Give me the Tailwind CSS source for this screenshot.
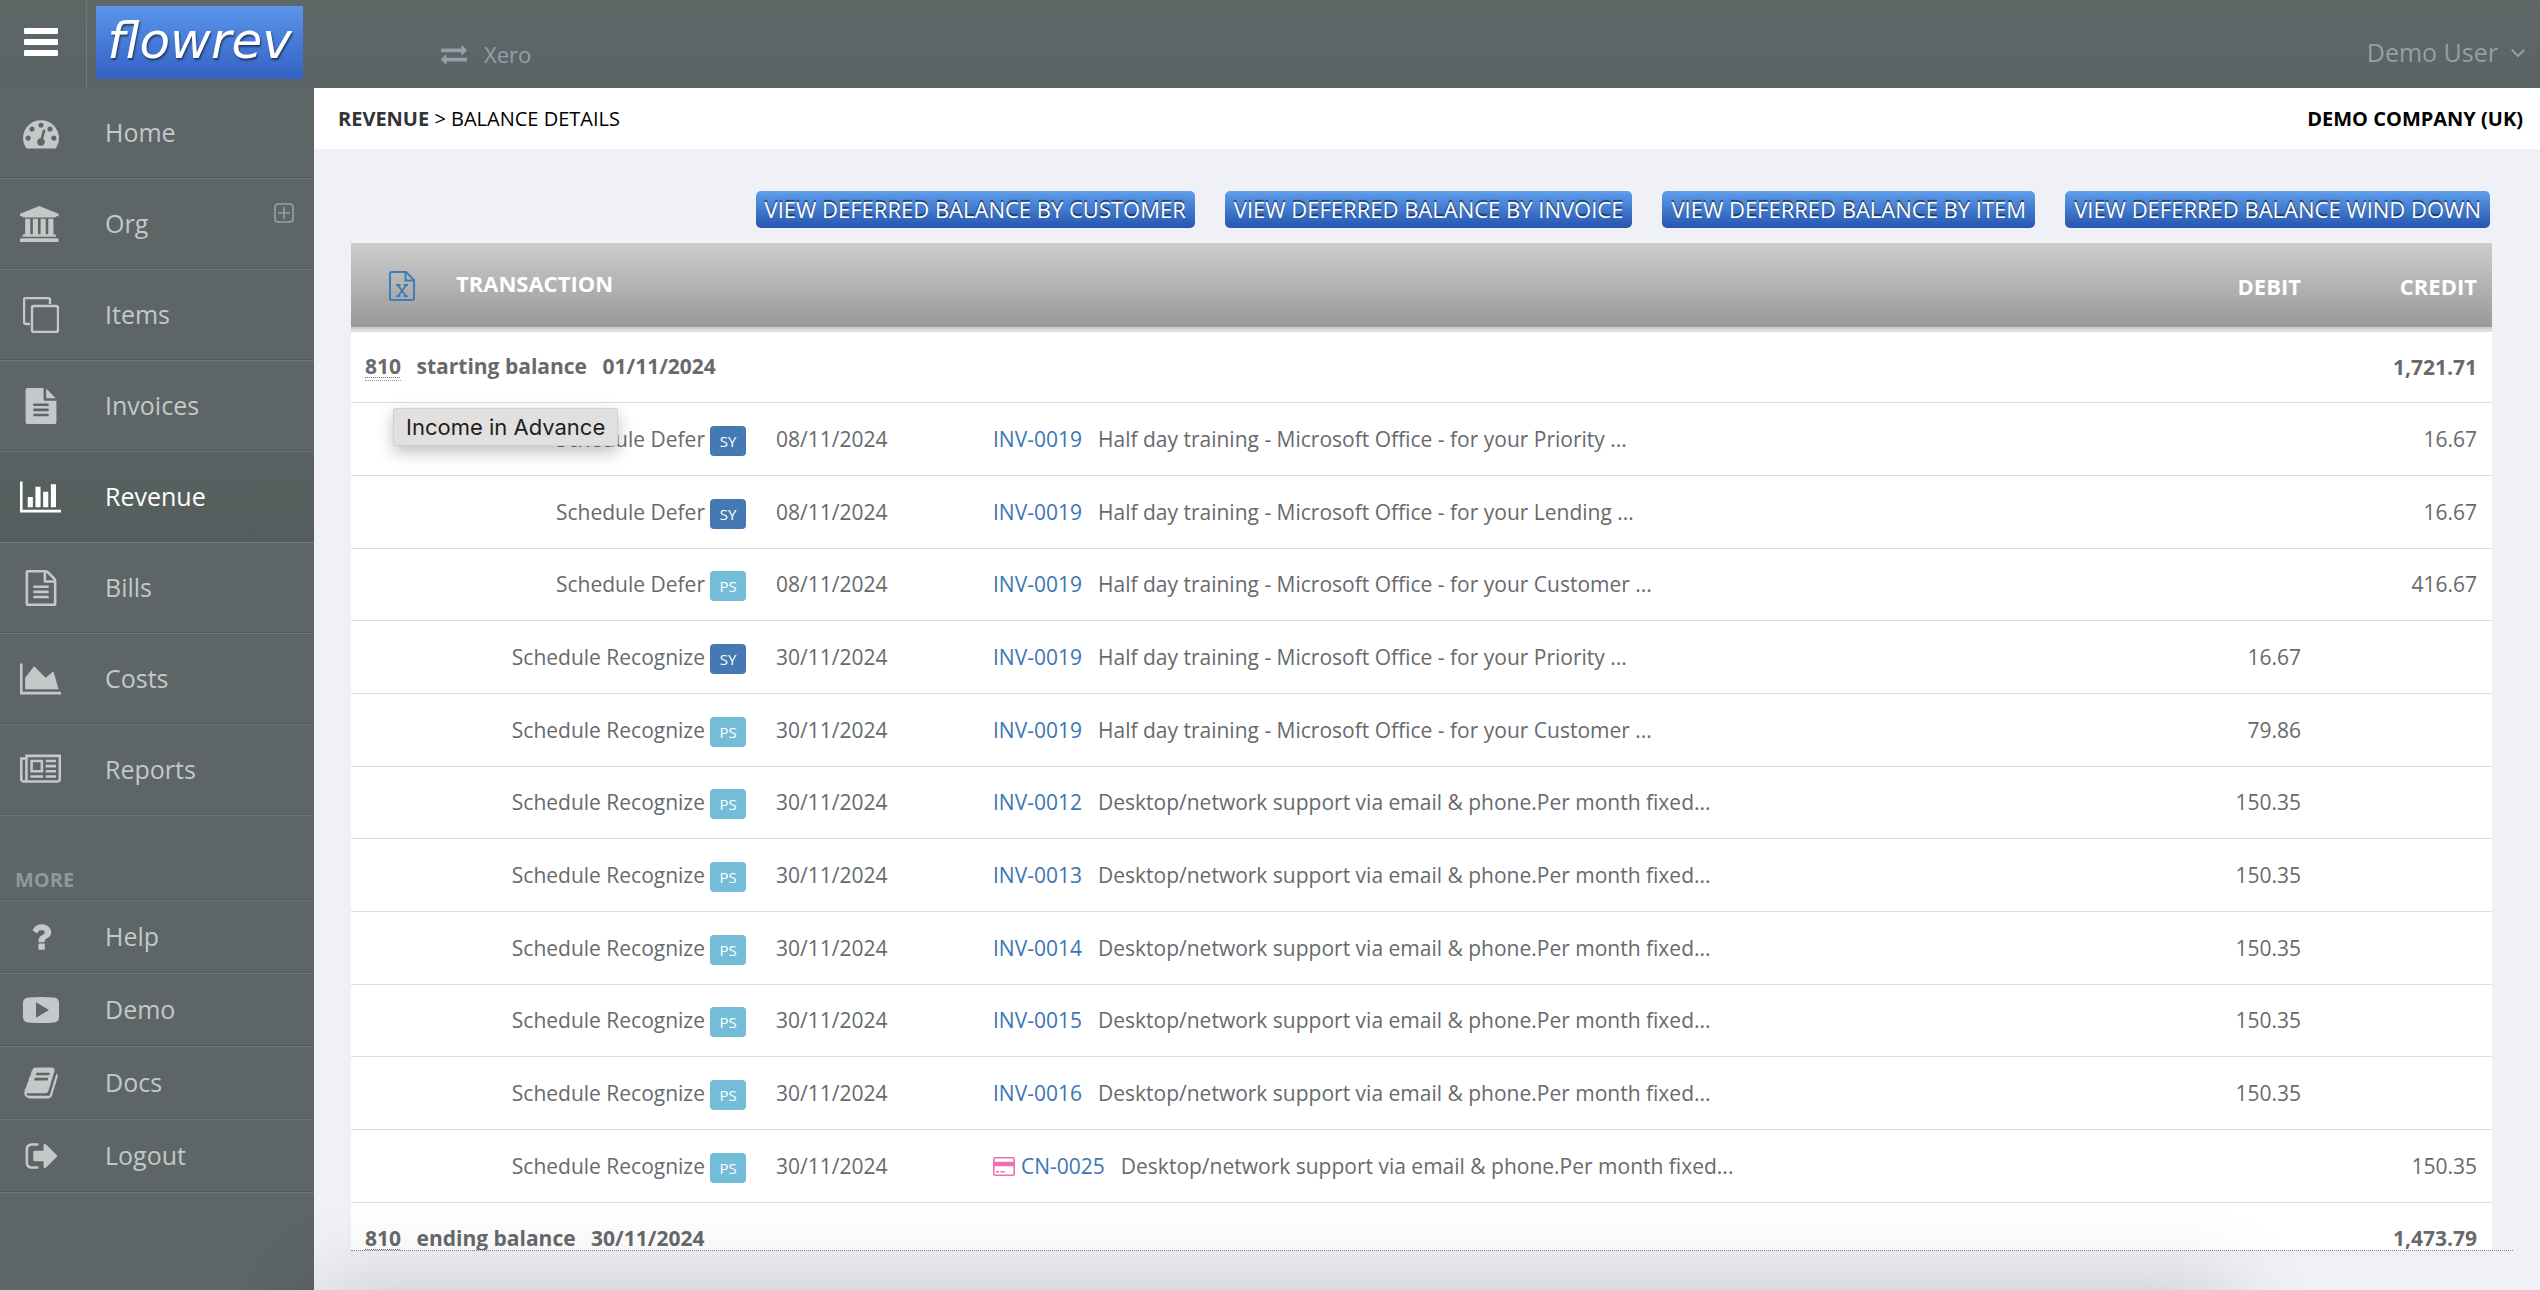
<!DOCTYPE html>
<html lang="en">

<head>
    <title>flowrev - Balance Details</title>
    <meta charset="utf-8">
    <meta name="viewport" content="width=device-width, initial-scale=1">
    <script src="https://cdn.jsdelivr.net/npm/@tailwindcss/browser@4"></script>
</head>

<body class="h-screen overflow-hidden flex flex-col bg-[#f0f1f6] font-['Open_Sans',sans-serif] text-[#676a6c]">

    <!-- top bar -->
    <header class="h-22 shrink-0 flex bg-linear-to-b from-[#5f6767] via-[#5c6666] to-[#5b6364] text-[#959ea9]">
        <button aria-label="Toggle menu" class="w-[87px] shrink-0 border-r border-[#6f7777] pl-6 pb-1 flex flex-col justify-center gap-[5px]">
            <span class="w-[34px] h-[6px] rounded-[1px] bg-white"></span>
            <span class="w-[34px] h-[6px] rounded-[1px] bg-white"></span>
            <span class="w-[34px] h-[6px] rounded-[1px] bg-white"></span>
        </button>
        <a href="#" class="ml-[9px] mt-[6px] w-[207px] h-[73px] flex items-center justify-center bg-linear-to-b from-[#5b95ea] to-[#3461c4] text-white font-['DejaVu_Sans',sans-serif] text-[50px] leading-[60px] italic pb-1 [text-shadow:1px_2px_2px_#00000080]">flowrev</a>
        <a href="#" class="ml-[138px] mt-5 flex items-center gap-[17px] text-[22px]">
            <svg class="w-[26px] h-[26px]" viewBox="0 0 1792 1792" fill="currentColor"><path d="M1792 1184v192q0 13-9.500 22.500t-22.500 9.500h-1376v192q0 13-9.500 22.500t-22.500 9.500q-12 0-24-10l-319-320q-9-9-9-22 0-14 9-23l320-320q9-9 23-9 13 0 22.500 9.500t9.500 22.500v192h1376q13 0 22.500 9.500t9.500 22.500zm0-544q0 14-9 23l-320 320q-9 9-23 9-13 0-22.500-9.500t-9.500-22.500v-192h-1376q-13 0-22.500-9.500t-9.500-22.500v-192q0-13 9.500-22.500t22.500-9.500h1376v-192q0-14 9-23t23-9q12 0 24 10l319 319q9 9 9 23z"/></svg>
            Xero
        </a>
        <button class="ml-auto mr-[15px] mt-[18px] flex items-center gap-[13px] text-[25px]">
            Demo User
            <svg class="w-[14px] h-2" viewBox="0 0 14 8" fill="none" stroke="currentColor" stroke-width="2"><path d="M.7.7 7 7 13.300.7"/></svg>
        </button>
    </header>

    <div class="flex-1 min-h-0 flex">

        <!-- sidebar -->
        <nav class="w-[314px] shrink-0 bg-[#5d6566] text-[#c2c9c8] text-[25px]">
            <ul class="[&>li]:h-[91px] [&>li]:border-b [&>li]:border-[#6f7777] [&>li]:shadow-[inset_0_-1px_0_#515959] [&_a]:h-full [&_a]:flex [&_a]:items-center [&_a>span]:w-[65px] [&_a>span]:ml-5 [&_a>span]:mr-5 [&_svg]:h-9">
                <li>
                    <a href="#"><span class="pl-[3px]"><svg viewBox="0 0 1792 1792" fill="currentColor"><path d="M384 1152q0-53-37.500-90.500t-90.500-37.500-90.500 37.500-37.500 90.500 37.500 90.500 90.500 37.500 90.500-37.500 37.500-90.500zm192-448q0-53-37.500-90.500t-90.500-37.500-90.500 37.500-37.500 90.500 37.500 90.500 90.500 37.500 90.500-37.500 37.500-90.500zm428 481l101-382q6-26-7.500-48.500t-38.500-29.500-48 6.500-30 39.500l-101 382q-60 5-107 43.500t-63 98.500q-20 77 20 146t117 89 146-20 89-117q16-60-6-117t-72-91zm660-33q0-53-37.500-90.500t-90.500-37.500-90.500 37.500-37.500 90.500 37.500 90.500 90.500 37.500 90.500-37.500 37.500-90.500zm-640-640q0-53-37.500-90.500t-90.500-37.500-90.500 37.500-37.500 90.500 37.500 90.500 90.500 37.500 90.500-37.500 37.500-90.500zm448 192q0-53-37.500-90.500t-90.500-37.500-90.500 37.500-37.500 90.500 37.500 90.500 90.500 37.500 90.500-37.500 37.500-90.500zm320 448q0 261-141 483-19 29-54 29h-1402q-35 0-54-29-141-221-141-483 0-182 71-348t191-286 286-191 348-71 348 71 286 191 191 286 71 348z"/></svg></span>Home</a>
                </li>
                <li class="relative">
                    <a href="#"><span><svg viewBox="0 0 1920 1792" fill="currentColor"><path d="M960 0l960 384v128h-128q0 26-20.500 45t-48.500 19h-1526q-28 0-48.500-19t-20.500-45h-128v-128zm-704 640h256v768h128v-768h256v768h128v-768h256v768h128v-768h256v768h59q28 0 48.500 19t20.500 45v64h-1664v-64q0-26 20.500-45t48.500-19h59v-768zm1595 960q28 0 48.500 19t20.500 45v128h-1920v-128q0-26 20.500-45t48.500-19h1782z"/></svg></span>Org</a>
                    <button aria-label="Expand Org" class="absolute right-5 top-6 text-[#959fab]">
                        <svg class="w-5 !h-5" viewBox="0 0 20 20" fill="none" stroke="currentColor" stroke-width="1.600"><rect x="1" y="1" width="18" height="18" rx="3"/><path d="M10 4v12M4 10h12"/></svg>
                    </button>
                </li>
                <li>
                    <a href="#"><span class="pl-[3px]"><svg viewBox="0 0 36 36" fill="none" stroke="currentColor" stroke-width="2.400"><rect x="9" y="9" width="26" height="26" rx="2"/><path d="M7 27H3a2 2 0 0 1-2-2V3a2 2 0 0 1 2-2h22a2 2 0 0 1 2 2v4"/></svg></span>Items</a>
                </li>
                <li>
                    <a href="#"><span class="pl-[3px]"><svg viewBox="0 0 1792 1792" fill="currentColor"><path d="M1596 476q14 14 28 36h-472v-472q22 14 36 28zm-476 164h544v1056q0 40-28 68t-68 28h-1344q-40 0-68-28t-28-68v-1600q0-40 28-68t68-28h800v544q0 40 28 68t68 28zm160 736v-64q0-14-9-23t-23-9h-704q-14 0-23 9t-9 23v64q0 14 9 23t23 9h704q14 0 23-9t9-23zm0-256v-64q0-14-9-23t-23-9h-704q-14 0-23 9t-9 23v64q0 14 9 23t23 9h704q14 0 23-9t9-23zm0-256v-64q0-14-9-23t-23-9h-704q-14 0-23 9t-9 23v64q0 14 9 23t23 9h704q14 0 23-9t9-23z"/></svg></span>Invoices</a>
                </li>
                <li class="bg-linear-to-b from-[#5a6162] via-[#56605f] to-[#555d5e] text-white">
                    <a href="#" aria-current="page"><span><svg viewBox="0 0 2048 1792" fill="currentColor"><path d="M640 896v512h-256v-512h256zm384-512v1024h-256v-1024h256zm1024 1152v128h-2048v-1536h128v1408h1920zm-640-896v768h-256v-768h256zm384-384v1152h-256v-1152h256z"/></svg></span>Revenue</a>
                </li>
                <li>
                    <a href="#"><span class="pl-[3px]"><svg viewBox="0 0 1792 1792" fill="currentColor"><path d="M1596 380q28 28 48 76t20 88v1152q0 40-28 68t-68 28h-1344q-40 0-68-28t-28-68v-1600q0-40 28-68t68-28h896q40 0 88 20t76 48zm-444-244v376h376q-10-29-22-41l-313-313q-12-12-41-22zm384 1528v-1024h-416q-40 0-68-28t-28-68v-416h-768v1536h1280zm-1024-864q0-14 9-23t23-9h704q14 0 23 9t9 23v64q0 14-9 23t-23 9h-704q-14 0-23-9t-9-23v-64zm736 224q14 0 23 9t9 23v64q0 14-9 23t-23 9h-704q-14 0-23-9t-9-23v-64q0-14 9-23t23-9h704zm0 256q14 0 23 9t9 23v64q0 14-9 23t-23 9h-704q-14 0-23-9t-9-23v-64q0-14 9-23t23-9h704z"/></svg></span>Bills</a>
                </li>
                <li>
                    <a href="#"><span><svg viewBox="0 0 2048 1792" fill="currentColor"><path d="M2048 1536v128h-2048v-1536h128v1408h1920zm-384-1024l256 896h-1664v-576l448-576 576 576z"/></svg></span>Costs</a>
                </li>
                <li>
                    <a href="#"><span><svg viewBox="0 0 2048 1792" fill="currentColor"><path d="M1024 512h-384v384h384v-384zm128 640v128h-640v-128h640zm0-768v640h-640v-640h640zm640 768v128h-512v-128h512zm0-256v128h-512v-128h512zm0-256v128h-512v-128h512zm0-256v128h-512v-128h512zm-1536 960v-960h-128v960q0 26 19 45t45 19 45-19 19-45zm1664 0v-1088h-1536v1088q0 33-11 64h1483q26 0 45-19t19-45zm128-1216v1216q0 80-56 136t-136 56h-1664q-80 0-136-56t-56-136v-1088h256v-128h1792z"/></svg></span>Reports</a>
                </li>
            </ul>

            <h2 class="h-[85px] pl-[15px] pt-[50px] text-[20px] leading-7 font-bold text-[#8f98a0] border-b border-[#6f7777] shadow-[inset_0_-1px_0_#515959]">MORE</h2>
            <ul class="[&>li]:h-[73px] [&>li]:border-b [&>li]:border-[#6f7777] [&>li]:shadow-[inset_0_-1px_0_#515959] [&_a]:h-full [&_a]:flex [&_a]:items-center [&_a>span]:w-[62px] [&_a>span]:ml-[23px] [&_a>span]:mr-5 [&_svg]:h-9">
                <li>
                    <a href="#"><span><svg viewBox="0 0 1792 1792" fill="currentColor"><path d="M1088 1256v240q0 16-12 28t-28 12h-240q-16 0-28-12t-12-28v-240q0-16 12-28t28-12h240q16 0 28 12t12 28zm316-600q0 54-15.500 101t-35 76.500-55 59.500-57.500 43.500-61 35.500q-41 23-68.500 65t-27.500 67q0 17-12 32.500t-28 15.500h-240q-15 0-25.500-18.500t-10.500-37.500v-45q0-83 65-156.500t143-108.500q59-27 84-56t25-76q0-42-46.500-74t-107.500-32q-65 0-108 29-35 25-107 115-13 16-31 16-12 0-25-8l-164-125q-13-10-15.500-25t5.500-28q160-266 464-266 80 0 161 31t146 83 106 127.500 41 158.500z"/></svg></span>Help</a>
                </li>
                <li>
                    <a href="#"><span><svg viewBox="0 0 36 36" fill="currentColor" fill-rule="evenodd"><path d="M5 5.500Q18 4.500 31 5.500q4.500.5 5 5 .6 7.500 0 15-.5 4.500-5 5-13 1-26 0-4.500-.5-5-5-.6-7.500 0-15 .5-4.500 5-5zM13 10.300v15.400L26 18z"/></svg></span>Demo</a>
                </li>
                <li>
                    <a href="#"><span><svg viewBox="0 0 1792 1792" fill="currentColor"><path d="M1703 478q40 57 18 129l-275 906q-19 64-76.500 107.500t-122.500 43.500h-923q-77 0-148.500-53.500t-99.500-131.500q-24-67-2-127 0-4 3-27t4-37q1-8-3-21.500t-3-19.500q2-11 8-21t16.500-23.500 16.500-23.500q23-38 45-91.500t30-91.500q3-10 .5-30t-.5-28q3-11 17-28t17-23q21-36 42-92t25-90q1-9-2.500-32t.5-28q4-13 22-30.500t22-22.500q19-26 42.500-84.500t27.500-96.500q1-8-3-25.500t-2-26.500q2-8 9-18t18-23 17-21q8-12 16.500-30.500t15-35 16-36 19.500-32 26.500-23.500 36-11.500 47.500 5.500l-1 3q38-9 51-9h761q74 0 114 56t18 130l-274 906q-36 119-71.500 153.500t-128.500 34.500h-869q-27 0-38 15-11 16-1 43 24 70 144 70h923q29 0 56-15.500t35-41.500l300-987q7-22 5-57 38 15 59 43zm-1064 2q-4 13 2 22.500t20 9.500h608q13 0 25.500-9.500t16.500-22.500l21-64q4-13-2-22.500t-20-9.500h-608q-13 0-25.500 9.500t-16.500 22.500zm-83 256q-4 13 2 22.500t20 9.500h608q13 0 25.500-9.500t16.500-22.500l21-64q4-13-2-22.500t-20-9.500h-608q-13 0-25.500 9.500t-16.500 22.500z"/></svg></span>Docs</a>
                </li>
                <li>
                    <a href="#"><span><svg viewBox="-64 0 1792 1792" fill="currentColor"><path d="M704 1440q0 4 1 20t.5 26.500-3 23.500-10 19.500-20.500 6.500h-320q-119 0-203.500-84.500t-84.500-203.500v-704q0-119 84.500-203.500t203.500-84.500h320q13 0 22.500 9.500t9.500 22.500q0 4 1 20t.5 26.500-3 23.500-10 19.500-20.500 6.500h-320q-66 0-113 47t-47 113v704q0 66 47 113t113 47h312l11.500 1 11.500 3 8 5.500 7 9 2 13.500zm928-544q0 26-19 45l-544 544q-19 19-45 19t-45-19-19-45v-288h-448q-26 0-45-19t-19-45v-384q0-26 19-45t45-19h448v-288q0-26 19-45t45-19 45 19l544 544q19 19 19 45z"/></svg></span>Logout</a>
                </li>
            </ul>
        </nav>

        <main class="flex-1 min-w-0 flex flex-col">
            <div class="h-[61px] shrink-0 pl-6 pr-[17px] pt-px flex items-center justify-between bg-white text-black text-[20px]">
                <p><a href="#" class="font-bold text-[#333]">REVENUE</a> &gt; BALANCE DETAILS</p>
                <p class="font-bold">DEMO COMPANY (UK)</p>
            </div>

            <div class="mt-[42px] mr-[50px] shrink-0 flex justify-end gap-[30px] text-[22px] text-white [&>button]:h-[37px] [&>button]:px-[9px] [&>button]:rounded-[5px] [&>button]:bg-linear-to-b [&>button]:from-[#5f9fec] [&>button]:to-[#2655b0] [&>button]:[text-shadow:0_-2px_1px_#00000090]">
                <button>VIEW DEFERRED BALANCE BY CUSTOMER</button>
                <button>VIEW DEFERRED BALANCE BY INVOICE</button>
                <button>VIEW DEFERRED BALANCE BY ITEM</button>
                <button>VIEW DEFERRED BALANCE WIND DOWN</button>
            </div>

            <!-- transactions -->
            <div class="mt-[15px] mb-[39px] ml-[37px] mr-[27px] pr-[21px] flex-1 min-h-0 overflow-hidden border-b border-dotted border-[#888]">
                <table class="w-full table-fixed bg-white text-[21px] leading-7 [&_td]:px-[15px] [&_th]:px-[15px] [&_td]:py-0 [&_td]:whitespace-nowrap">
                    <colgroup>
                        <col class="w-[410px]">
                        <col class="w-[217px]">
                        <col>
                        <col class="w-[176px]">
                        <col class="w-[176px]">
                    </colgroup>
                    <thead>
                        <tr class="h-[87px] border-b-3 border-[#ddd] bg-linear-to-b from-[#cdcdcd] to-[#999] text-white text-[22px]">
                            <th colspan="3" class="text-left">
                                <div class="pl-[23px] flex items-center gap-[41px]">
                                    <a href="#" aria-label="Export to Excel" class="text-[#3f7cba]">
                                        <svg class="w-[26px] h-[30px]" viewBox="0 0 26 30" fill="none" stroke="currentColor" stroke-width="2"><path d="M2.500 1H17l8 8v18.500a1.500 1.500 0 0 1-1.500 1.500h-21A1.500 1.500 0 0 1 1 27.500v-25A1.500 1.500 0 0 1 2.500 1zM16.500 1v8.500H25"/><path d="m9 14.500 8 10.500M17 14.500 9 25M7 14h4.500M14.500 14H19M7 25.200h4.500M14.500 25.200H19" stroke-width="1.800"/></svg>
                                    </a>
                                    <span class="pb-[6px]">TRANSACTION</span>
                                </div>
                            </th>
                            <th class="text-right">DEBIT</th>
                            <th class="text-right">CREDIT</th>
                        </tr>
                    </thead>
                    <tbody class="[&>tr]:h-[73px] [&>tr:nth-child(3n+1)]:h-[72px] [&>tr]:border-b [&>tr]:border-[#ddd] [&_td:nth-child(1)]:text-right [&_td:nth-child(4)]:text-right [&_td:nth-child(5)]:text-right [&_a]:text-[#3c75b3] [&_a]:mr-4 [&_mark]:inline-block [&_mark]:w-9 [&_mark]:h-[30px] [&_mark]:leading-[30px] [&_mark]:-my-1 [&_mark]:ml-[5px] [&_mark]:rounded-[4px] [&_mark]:text-center [&_mark]:text-[15px] [&_mark]:font-medium [&_mark]:text-white">
                        <tr class="font-bold">
                            <th colspan="3" class="text-left !px-[14px]">
                                <span class="relative inline-block border-b border-dotted border-[#999]">
                                    <abbr class="underline decoration-dotted decoration-1 underline-offset-3">810</abbr>
                                    <span role="tooltip" class="absolute left-7 top-full mt-[28px] w-max px-3 h-[38px] leading-[36px] z-10 border border-[#d0d0cf] bg-[#e1e0df] text-[#1e1e1e] font-['Inter',sans-serif] font-normal text-[22px] rounded-[2px] shadow-[0_6px_16px_#00000040]">Income in Advance</span>
                                </span>
                                <span class="ml-[10px]">starting balance</span>
                                <span class="ml-[10px]">01/11/2024</span>
                            </th>
                            <td></td>
                            <td class="!text-right">1,721.71</td>
                        </tr>
                        <tr>
                            <td>Schedule Defer<mark class="bg-[#4479b3]">SY</mark></td>
                            <td>08/11/2024</td>
                            <td><a href="#">INV-0019</a>Half day training - Microsoft Office - for your Priority ...</td>
                            <td></td>
                            <td>16.67</td>
                        </tr>
                        <tr>
                            <td>Schedule Defer<mark class="bg-[#4479b3]">SY</mark></td>
                            <td>08/11/2024</td>
                            <td><a href="#">INV-0019</a>Half day training - Microsoft Office - for your Lending ...</td>
                            <td></td>
                            <td>16.67</td>
                        </tr>
                        <tr>
                            <td>Schedule Defer<mark class="bg-[#73bdd8]">PS</mark></td>
                            <td>08/11/2024</td>
                            <td><a href="#">INV-0019</a>Half day training - Microsoft Office - for your Customer ...</td>
                            <td></td>
                            <td>416.67</td>
                        </tr>
                        <tr>
                            <td>Schedule Recognize<mark class="bg-[#4479b3]">SY</mark></td>
                            <td>30/11/2024</td>
                            <td><a href="#">INV-0019</a>Half day training - Microsoft Office - for your Priority ...</td>
                            <td>16.67</td>
                            <td></td>
                        </tr>
                        <tr>
                            <td>Schedule Recognize<mark class="bg-[#73bdd8]">PS</mark></td>
                            <td>30/11/2024</td>
                            <td><a href="#">INV-0019</a>Half day training - Microsoft Office - for your Customer ...</td>
                            <td>79.86</td>
                            <td></td>
                        </tr>
                        <tr>
                            <td>Schedule Recognize<mark class="bg-[#73bdd8]">PS</mark></td>
                            <td>30/11/2024</td>
                            <td><a href="#">INV-0012</a>Desktop/network support via email &amp; phone.Per month fixed...</td>
                            <td>150.35</td>
                            <td></td>
                        </tr>
                        <tr>
                            <td>Schedule Recognize<mark class="bg-[#73bdd8]">PS</mark></td>
                            <td>30/11/2024</td>
                            <td><a href="#">INV-0013</a>Desktop/network support via email &amp; phone.Per month fixed...</td>
                            <td>150.35</td>
                            <td></td>
                        </tr>
                        <tr>
                            <td>Schedule Recognize<mark class="bg-[#73bdd8]">PS</mark></td>
                            <td>30/11/2024</td>
                            <td><a href="#">INV-0014</a>Desktop/network support via email &amp; phone.Per month fixed...</td>
                            <td>150.35</td>
                            <td></td>
                        </tr>
                        <tr>
                            <td>Schedule Recognize<mark class="bg-[#73bdd8]">PS</mark></td>
                            <td>30/11/2024</td>
                            <td><a href="#">INV-0015</a>Desktop/network support via email &amp; phone.Per month fixed...</td>
                            <td>150.35</td>
                            <td></td>
                        </tr>
                        <tr>
                            <td>Schedule Recognize<mark class="bg-[#73bdd8]">PS</mark></td>
                            <td>30/11/2024</td>
                            <td><a href="#">INV-0016</a>Desktop/network support via email &amp; phone.Per month fixed...</td>
                            <td>150.35</td>
                            <td></td>
                        </tr>
                        <tr>
                            <td>Schedule Recognize<mark class="bg-[#73bdd8]">PS</mark></td>
                            <td>30/11/2024</td>
                            <td>
                                <svg class="inline-block w-[22px] h-[19px] mr-[6px] align-[-2px] text-[#ee6fb0]" viewBox="0 0 22 19" fill="none" stroke="currentColor"><rect x=".8" y=".8" width="20.400" height="17.400" rx="1.500" stroke-width="1.600"/><path d="M1 7h20" stroke-width="4.500"/><path d="M3 14.800h3M7.500 14.800h4" stroke-width="1.500"/></svg><a href="#">CN-0025</a>Desktop/network support via email &amp; phone.Per month fixed...
                            </td>
                            <td></td>
                            <td>150.35</td>
                        </tr>
                        <tr class="font-bold">
                            <th colspan="3" class="text-left !px-[14px]">
                                <span class="inline-block border-b border-dotted border-[#999]"><abbr class="underline decoration-dotted decoration-1 underline-offset-3">810</abbr></span>
                                <span class="ml-[10px]">ending balance</span>
                                <span class="ml-[10px]">30/11/2024</span>
                            </th>
                            <td></td>
                            <td class="!text-right">1,473.79</td>
                        </tr>
                    </tbody>
                </table>
            </div>
        </main>
    </div>

    <!-- soft shade along the bottom edge -->
    <div class="fixed top-full left-[320px] right-[310px] h-40 shadow-[0_0_90px_#00000030] pointer-events-none"></div>
</body>

</html>
